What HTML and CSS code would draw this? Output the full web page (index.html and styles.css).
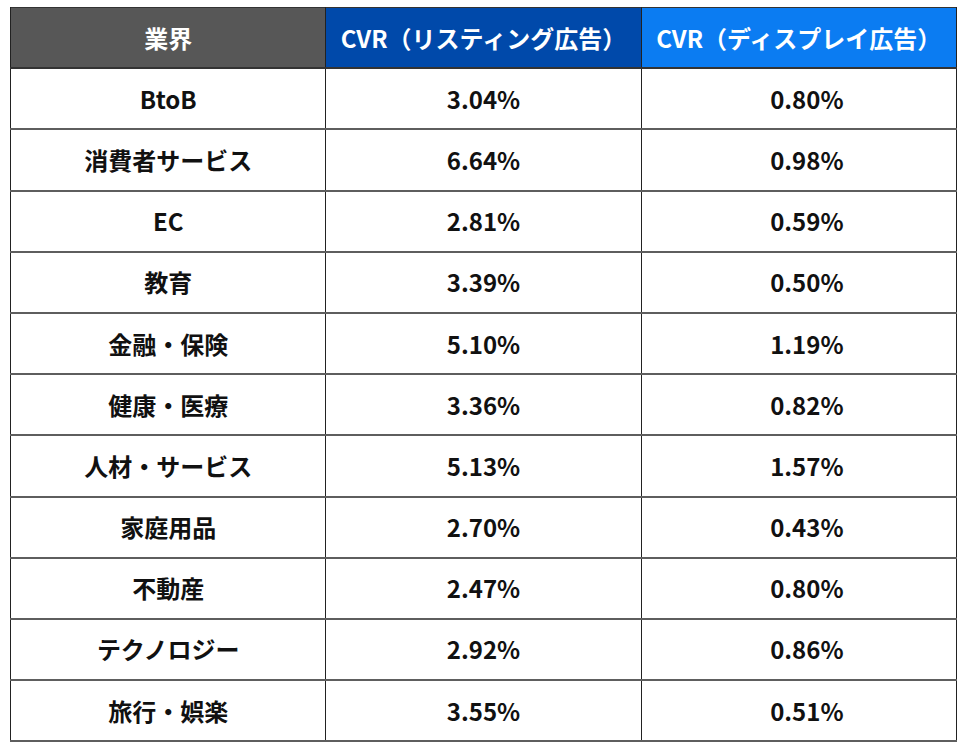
FILE: index.html
```html
<!DOCTYPE html>
<html lang="ja">
<head>
<meta charset="utf-8">
<link rel="stylesheet" href="styles.css">
</head>
<body>
<table class="cvr">
<thead>
<tr><th class="h-ind">業界</th><th class="h-list">CVR（リスティング広告）</th><th class="h-disp">CVR（ディスプレイ広告）</th></tr>
</thead>
<tbody>
<tr><td>BtoB</td><td>3.04%</td><td>0.80%</td></tr>
<tr><td>消費者サービス</td><td>6.64%</td><td>0.98%</td></tr>
<tr><td>EC</td><td>2.81%</td><td>0.59%</td></tr>
<tr><td>教育</td><td>3.39%</td><td>0.50%</td></tr>
<tr><td>金融・保険</td><td>5.10%</td><td>1.19%</td></tr>
<tr><td>健康・医療</td><td>3.36%</td><td>0.82%</td></tr>
<tr><td>人材・サービス</td><td>5.13%</td><td>1.57%</td></tr>
<tr><td>家庭用品</td><td>2.70%</td><td>0.43%</td></tr>
<tr><td>不動産</td><td>2.47%</td><td>0.80%</td></tr>
<tr><td>テクノロジー</td><td>2.92%</td><td>0.86%</td></tr>
<tr><td>旅行・娯楽</td><td>3.55%</td><td>0.51%</td></tr>
</tbody>
</table>
</body>
</html>
```

FILE: styles.css
```css
html, body {
  margin: 0;
  padding: 0;
  background: #ffffff;
}
body {
  padding: 7px 0 0 10px;
  font-family: "Noto Sans CJK JP", "Noto Sans", sans-serif;
  font-weight: 700;
  color: #111111;
}
.cvr {
  border-collapse: collapse;
  width: 947px;
  table-layout: fixed;
  border: 1.5px solid #333333;
}
.cvr th, .cvr td {
  height: 59.2px;
  padding: 0;
  text-align: center;
  vertical-align: middle;
  font-size: 24px;
  line-height: 1;
  border-left: 1px solid #222222;
  border-right: 1px solid #222222;
  border-bottom: 2px solid #5e5e5e;
}
.cvr td:nth-child(3) {
  padding-left: 16px;
}
.cvr th {
  color: #ffffff;
  font-weight: 700;
  border-bottom: 2px solid #333333;
}
.h-ind { background: #575757; }
.h-list { background: #0049aa; }
.h-disp { background: #0b7cf2; }
```
